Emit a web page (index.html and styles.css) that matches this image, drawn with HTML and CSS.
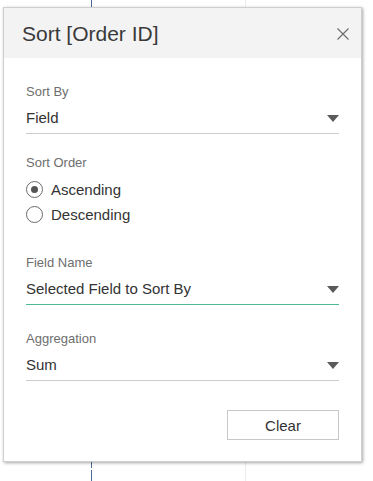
FILE: index.html
```html
<!DOCTYPE html>
<html lang="en">
<head>
    <meta charset="UTF-8">
    <meta name="viewport" content="width=device-width, initial-scale=1.0">
    <title>Sort [Order ID]</title>
    <link rel="stylesheet" href="styles.css">
</head>
<body>
    <div class="guide guide-blue"></div>
    <div class="guide guide-gray"></div>

    <div class="sort-dialog">
        <div class="dialog-header">
            <h1 class="dialog-title">Sort [Order ID]</h1>
            <button class="close-btn" type="button" aria-label="Close">
                <svg width="12" height="12" viewBox="0 0 12 12">
                    <path d="M0.5 0.5 L11.5 11.5 M11.5 0.5 L0.5 11.5" stroke="#6b6b6b" stroke-width="1.1" fill="none"/>
                </svg>
            </button>
        </div>

        <div class="dialog-body">
            <div class="field-group">
                <div class="field-label">Sort By</div>
                <div class="select-box">
                    <span>Field</span>
                    <span class="select-arrow"></span>
                </div>
            </div>

            <div class="field-group order-group">
                <div class="field-label">Sort Order</div>
                <div class="radio-list">
                    <label class="radio-row">
                        <span class="radio-circle checked"></span>
                        <span>Ascending</span>
                    </label>
                    <label class="radio-row">
                        <span class="radio-circle"></span>
                        <span>Descending</span>
                    </label>
                </div>
            </div>

            <div class="field-group name-group">
                <div class="field-label">Field Name</div>
                <div class="select-box active">
                    <span>Selected Field to Sort By</span>
                    <span class="select-arrow"></span>
                </div>
            </div>

            <div class="field-group agg-group">
                <div class="field-label">Aggregation</div>
                <div class="select-box">
                    <span>Sum</span>
                    <span class="select-arrow"></span>
                </div>
            </div>

            <div class="dialog-actions">
                <button class="clear-btn" type="button">Clear</button>
            </div>
        </div>
    </div>
</body>
</html>
```

FILE: styles.css
```css
* {
    margin: 0;
    padding: 0;
    box-sizing: border-box;
}

body {
    font-family: 'Liberation Sans', Arial, sans-serif;
    background: #ffffff;
    width: 373px;
    height: 481px;
    position: relative;
    overflow: hidden;
    padding: 7px 0 0 3px;
}

/* worksheet lines behind the dialog */
.guide {
    position: absolute;
    top: 0;
    bottom: 0;
    width: 1px;
}

.guide-blue {
    left: 91px;
    background: linear-gradient(to bottom, #4a6a91 0, #4a6a91 468px, transparent 468px, transparent 470px, #4a6a91 470px);
}

.guide-gray {
    left: 245px;
    background: #ececec;
}

.sort-dialog {
    position: relative;
    z-index: 1;
    width: 359px;
    height: 455px;
    background: #ffffff;
    border: 1px solid #cfcfcf;
    box-shadow: 1px 1px 3px rgba(0, 0, 0, 0.35);
}

.dialog-header {
    height: 50px;
    background: #f3f3f3;
    display: flex;
    align-items: center;
    justify-content: space-between;
    padding: 1px 12px 0 18px;
}

.dialog-title {
    font-size: 21px;
    font-weight: 400;
    line-height: 24px;
    color: #3a3a3a;
}

.close-btn {
    background: none;
    border: none;
    width: 12px;
    height: 12px;
    margin-top: 1px;
    display: flex;
}

.dialog-body {
    padding: 26px 22px 0 22px;
}

.field-label {
    font-size: 13px;
    line-height: 15px;
    color: #6e6e6e;
    margin-bottom: 10px;
}

.select-box {
    display: flex;
    align-items: center;
    justify-content: space-between;
    font-size: 15px;
    line-height: 18px;
    color: #333333;
    padding-bottom: 6px;
    border-bottom: 1px solid #cccccc;
}

.select-box.active {
    border-bottom-color: #4bb897;
}

.select-arrow {
    width: 0;
    height: 0;
    border-left: 6px solid transparent;
    border-right: 6px solid transparent;
    border-top: 7px solid #5a5a5a;
}

.order-group {
    margin-top: 21px;
}

.radio-list {
    margin-top: -3px;
}

.radio-row {
    display: flex;
    align-items: center;
    gap: 8px;
    height: 25px;
    font-size: 15px;
    color: #333333;
}

.radio-circle {
    width: 17px;
    height: 17px;
    border: 1.3px solid #6a6a6a;
    border-radius: 50%;
    display: flex;
    align-items: center;
    justify-content: center;
    flex-shrink: 0;
}

.radio-circle.checked::after {
    content: '';
    width: 7px;
    height: 7px;
    border-radius: 50%;
    background: #555555;
}

.name-group {
    margin-top: 28px;
}

.agg-group {
    margin-top: 26px;
}

.dialog-actions {
    display: flex;
    justify-content: flex-end;
    margin-top: 29px;
}

.clear-btn {
    width: 112px;
    height: 30px;
    background: #ffffff;
    border: 1px solid #c8c8c8;
    font-family: 'Liberation Sans', Arial, sans-serif;
    font-size: 15px;
    color: #333333;
}
```
